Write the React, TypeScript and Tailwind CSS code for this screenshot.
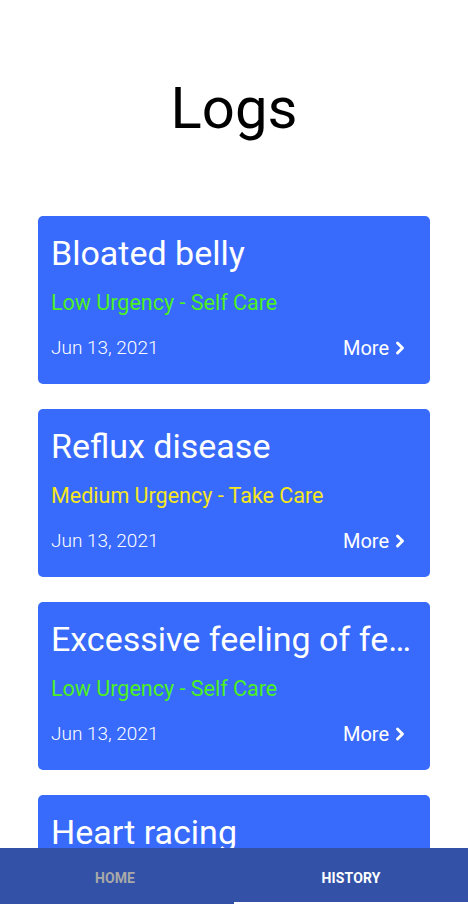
import { ChevronRight } from 'lucide-react'

type Log = {
  id: number
  title: string
  urgency: 'low' | 'medium'
  date: string
}

const logs: Log[] = [
  { id: 1, title: 'Bloated belly', urgency: 'low', date: 'Jun 13, 2021' },
  { id: 2, title: 'Reflux disease', urgency: 'medium', date: 'Jun 13, 2021' },
  { id: 3, title: 'Excessive feeling of fear', urgency: 'low', date: 'Jun 13, 2021' },
  { id: 4, title: 'Heart racing', urgency: 'low', date: 'Jun 13, 2021' },
]

function LogCard({ log }: { log: Log }) {
  return (
    <div className="flex h-[168px] shrink-0 flex-col rounded-[5px] bg-[#386afc] px-[13px] text-white">
      <h2 className="mt-[16px] truncate text-[34px] leading-[42px]">{log.title}</h2>

      {log.urgency === 'low' ? (
        <p className="mt-[15px] text-[21.5px] leading-[28px] text-[#4df01f]">
          Low Urgency - Self Care
        </p>
      ) : (
        <p className="mt-[15px] text-[21.5px] leading-[28px] text-[#f5e61e]">
          Medium Urgency - Take Care
        </p>
      )}

      <div className="mt-[17px] flex items-center justify-between pr-[7px]">
        <p className="text-[19px] font-light leading-[28px]">{log.date}</p>
        <button className="flex items-center gap-[1px] text-[20px] leading-[28px]">
          More
          <ChevronRight size={20} strokeWidth={3.5} />
        </button>
      </div>
    </div>
  )
}

function App() {
  return (
    <div className="flex h-screen flex-col overflow-hidden bg-white font-['Roboto',sans-serif]">
      <main className="flex-1 overflow-hidden">
        <h1 className="pt-[72px] text-center text-[58px] leading-[72px] text-black">
          Logs
        </h1>

        <div className="mt-[72px] flex flex-col gap-[25px] px-[38px]">
          {logs.map((log) => (
            <LogCard key={log.id} log={log} />
          ))}
        </div>
      </main>

      <nav className="flex h-[56px] shrink-0 bg-[#3352a7]">
        <button className="flex flex-1 items-center justify-center pt-[4px] text-[14px] font-bold tracking-[0.01em] text-[#a9a9a9]">
          <span className="mr-[4px]">HOME</span>
        </button>
        <button className="flex flex-1 items-center justify-center border-b-2 border-white pt-[6px] text-[14px] font-bold tracking-[0.01em] text-white">
          HISTORY
        </button>
      </nav>
    </div>
  )
}

export default App
